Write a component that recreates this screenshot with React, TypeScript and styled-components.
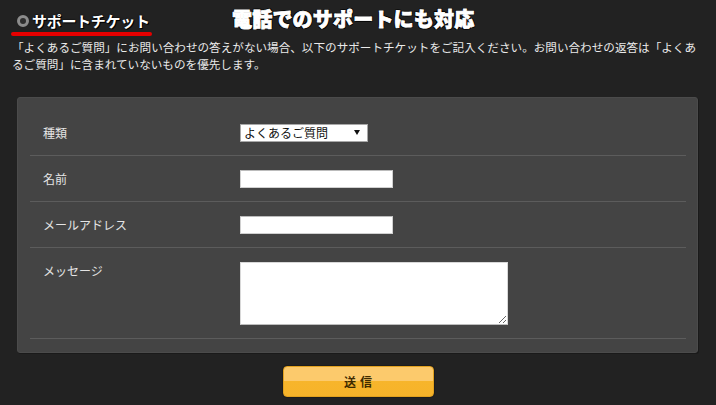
import React from "react";
import styled, { createGlobalStyle } from "styled-components";

const GlobalStyle = createGlobalStyle`
  html, body {
    margin: 0;
    padding: 0;
    background: #222222;
  }
  body {
    font-family: "Noto Sans CJK JP", "Noto Sans", sans-serif;
    color: #eeeeee;
  }
  * { box-sizing: border-box; }
`;

const Page = styled.div`
  width: 716px;
  height: 405px;
  background: #222222;
  overflow: hidden;
`;

const Header = styled.header`
  display: flex;
  align-items: flex-start;
  padding: 7px 0 0 11px;
`;

const TitleBlock = styled.div`
  display: flex;
  flex-direction: column;
  width: 141px;
`;

const TitleRow = styled.div`
  display: flex;
  align-items: center;
  gap: 3px;
  padding: 2px 0 0 6px;
  height: 25px;
`;

const Ring = styled.span`
  width: 12px;
  height: 12px;
  border-radius: 50%;
  border: 3px solid #8c8c8c;
  background: #2e2e2e;
  flex: none;
`;

const TitleText = styled.h2`
  margin: 0;
  font-size: 15px;
  font-weight: 700;
  line-height: 20px;
  color: #ffffff;
  letter-spacing: -0.3px;
  text-shadow: 1px 1px 0 #000, 0 0 2px #000;
`;

const Underline = styled.div`
  height: 4px;
  border-radius: 2px;
  background: #e60000;
`;

const Headline = styled.div`
  margin-left: 80px;
  font-size: 20px;
  line-height: 24px;
  font-weight: 900;
  color: #ffffff;
  -webkit-text-stroke: 0.8px #ffffff;
  letter-spacing: 0.2px;
  text-shadow: 1px 1px 0 #000, -1px -1px 0 #000, 1px -1px 0 #000, -1px 1px 0 #000;
`;

const Description = styled.p`
  margin: 3px 0 0 12px;
  font-size: 11.6px;
  line-height: 17px;
  color: #eaeaea;
  white-space: nowrap;
`;

const Panel = styled.form`
  margin: 24px 18px 0 17px;
  background: #444444;
  border: 1px solid #4b4b4b;
  border-radius: 3px;
  padding: 12px 11px 13px 12px;
  box-shadow: 1px 1px 0 #1a1a1a;
`;

const Row = styled.div`
  display: grid;
  grid-template-columns: 210px 1fr;
  align-items: start;
  padding: 14px 0 13px 0;
  border-bottom: 1px solid #5c5c5c;
`;

const Label = styled.label`
  display: block;
  padding-left: 13px;
  font-size: 12px;
  line-height: 18px;
  color: #e4e4e4;
`;

const SelectWrap = styled.div`
  position: relative;
  width: 128px;
  height: 18px;
`;

const Select = styled.select`
  display: block;
  appearance: none;
  -webkit-appearance: none;
  width: 100%;
  height: 18px;
  margin: 0;
  padding: 0 0 0 3px;
  border: 1px solid #a8a8a8;
  border-radius: 0;
  background: #ffffff;
  font-family: "Noto Sans CJK JP", sans-serif;
  font-size: 12px;
  line-height: 16px;
  color: #111111;
`;

const Arrow = styled.svg`
  position: absolute;
  right: 8px;
  top: 6px;
  width: 6px;
  height: 5px;
  pointer-events: none;
`;

const TextInput = styled.input`
  display: block;
  width: 153px;
  height: 18px;
  margin: 0;
  padding: 0 3px;
  border: 1px solid #d0d0d0;
  border-top-color: #bbbbbb;
  background: #ffffff;
  font-size: 12px;
`;

const TextArea = styled.textarea`
  display: block;
  width: 268px;
  height: 63px;
  margin: 0;
  padding: 2px;
  border: 1px solid #d8d8d8;
  border-bottom-color: #bdbdbd;
  background: #ffffff;
  font-size: 12px;
`;

const Submit = styled.button`
  display: block;
  margin: 13px auto 0;
  width: 151px;
  height: 31px;
  border: 1px solid #e2a11f;
  border-radius: 4px;
  background: linear-gradient(#fcca6c 0%, #fcca6c 50%, #f7b52b 50%, #f6b32a 100%);
  font-family: "Noto Sans CJK JP", sans-serif;
  font-size: 12px;
  font-weight: 700;
  color: #3e2b00;
  letter-spacing: 4px;
  padding: 0 0 0 4px;
  box-shadow: 0 0 0 1px #1c1c1c;
`;

export default function App() {
  return (
    <Page>
      <GlobalStyle />
      <Header>
        <TitleBlock>
          <TitleRow>
            <Ring />
            <TitleText>サポートチケット</TitleText>
          </TitleRow>
          <Underline />
        </TitleBlock>
        <Headline>電話でのサポートにも対応</Headline>
      </Header>
      <Description>
        「よくあるご質問」にお問い合わせの答えがない場合、以下のサポートチケットをご記入ください。お問い合わせの返答は「よくあ
        <br />
        るご質問」に含まれていないものを優先します。
      </Description>
      <Panel onSubmit={(e) => e.preventDefault()}>
        <Row>
          <Label htmlFor="kind">種類</Label>
          <SelectWrap>
            <Select id="kind" defaultValue="faq">
              <option value="faq">よくあるご質問</option>
            </Select>
            <Arrow viewBox="0 0 6 5">
              <path d="M0 0 H6 L3 5 Z" fill="#111" />
            </Arrow>
          </SelectWrap>
        </Row>
        <Row>
          <Label htmlFor="name">名前</Label>
          <TextInput id="name" type="text" />
        </Row>
        <Row>
          <Label htmlFor="mail">メールアドレス</Label>
          <TextInput id="mail" type="text" />
        </Row>
        <Row>
          <Label htmlFor="msg">メッセージ</Label>
          <TextArea id="msg" />
        </Row>
      </Panel>
      <Submit type="button">送信</Submit>
    </Page>
  );
}
